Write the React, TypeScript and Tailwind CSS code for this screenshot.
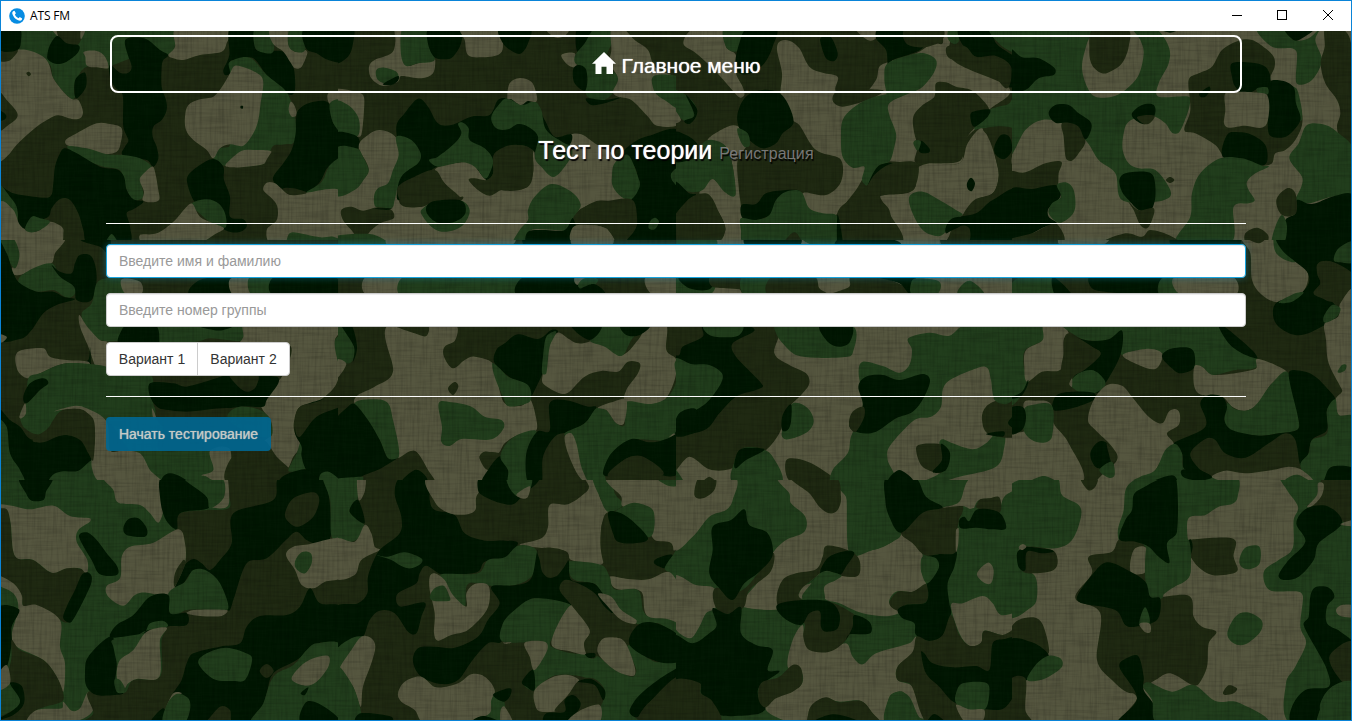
import React from "react";

type Tone = "t" | "g" | "b" | "d";

interface Tile {
  x: number;
  y: number;
  base: Tone;
  patches: string;
}

const tones: Record<Tone, string> = {
  t: "#55563f",
  g: "#213d1c",
  b: "#1f2912",
  d: "#021703",
};

// Camouflage fabric, in tiles of 340x240. Each line is a tone followed by the outline points of a patch.
const tiles: Tile[] = [
  {
    x: 0,
    y: 0,
    base: "b",
    patches: `
g 45 93 530 85 530 120 508 165 440 160 330 200 325 205 260 200 228 240 222 270 225 290 215 297 190 275 160 235 145 190 52 155
t 0 148 52 148 90 152 130 170 148 195 160 235 190 275 215 297 235 300 249 335 240 355 215 357 175 346 150 355 110 380 75 410 45 440 25 465 0 480
b 0 148 52 148 40 172 25 183 0 182
d -10 85 56 85 63 120 52 150 0 150
b 0 282 20 300 50 335 50 355 25 375 0 388
d 0 333 18 345 15 358 0 360
t 155 85 180 85 190 115 175 112
b 175 110 175 85 245 85 238 130 215 137 190 128
t 242 93 255 93 243 118
d 142 165 150 135 172 108 200 130 237 137 232 160 200 185 170 192 145 180
d 228 235 255 218 258 260 230 295 223 270
t 252 155 290 153 315 170 325 203 300 203 262 198 256 170
d 375 122 400 112 440 118 480 150 505 165 490 180 485 200 485 260 498 300 500 330 485 360 460 380 458 410 470 440 475 475 460 500 440 480 380 475 365 460 375 440 385 420 370 380 368 285 345 262 330 230 330 195 360 218 385 218 395 200 382 160
t 530 85 690 85 680 130 665 155 600 165 550 180 520 175 505 165 525 140
d 690 85 765 85 770 150 850 155 880 200 885 270 870 285 840 260 800 225 760 175 720 178 690 185 690 220 675 225 670 210 688 165
g 765 85 810 85 820 155 775 153 762 130
t 810 85 870 85 865 130 885 155 915 150 922 160 905 200 885 205 870 185 850 155 818 130
g 870 85 915 85 915 150 885 155 865 135
d 915 85 1030 85 1030 180 985 180 950 160 918 145
g 690 215 690 185 750 173 800 225 850 265 872 300 885 350 890 410 870 435 825 435 810 455 795 490 740 500 700 500 665 495 640 475 660 445 690 435
t 705 197 740 205 780 225 790 250 782 310 775 360 760 400 730 437 690 433 660 445 640 475 620 450 580 420 558 390 555 350 565 315 600 298 640 290 665 262 690 220
t 725 452 760 450 815 455 795 490 740 500 700 502 676 497 695 475
b 825 440 870 432 878 450 850 490 825 530 800 510 795 490 815 455
t 872 305 885 320 890 345 875 350 866 330
d 722 318 729 318 728 326 722 325
b 79 220 86 215 93 222 86 229
d 895 330 930 308 985 308 1000 370 1030 395 1030 480 985 500 960 545 920 578 860 572 825 550 820 530 850 490 875 450 887 400 888 360
t 985 280 1030 278 1030 312 990 312
g 990 310 1030 305 1030 395 1000 370
g 1030 478 990 495 965 545 918 578 950 585 1030 582
t 790 570 800 548 825 550 860 580 880 585 920 578 1030 578 1030 730 815 730 800 690 830 660 832 620 815 595
b 850 565 880 565 920 578 880 586 860 580
g 865 705 880 697 960 712 1000 710 1030 730 865 730
d 562 550 565 525 600 495 640 477 670 500 672 540 690 590 690 650 730 658 740 680 715 697 675 690 620 650 580 600
g 575 612 620 598 655 610 675 640 678 680 650 680 610 650
t 420 705 470 700 520 665 560 620 578 612 600 650 640 670 672 685 650 700 590 730 430 730
t 197 420 230 400 290 370 330 372 365 385 362 430 350 455 310 463 270 455 220 440 200 435
g 200 440 260 445 320 463 370 465 420 475 455 500 440 520 425 550 430 590 400 600 380 570 370 530 355 508 310 500 260 480
d 195 445 230 460 300 500 350 508 372 530 380 570 400 598 430 605 400 628 380 640 390 680 385 730 265 730 250 690 235 640 210 600 180 597 155 625 145 650 95 670 75 685 55 680 50 630 0 560 40 580 100 590 150 590 160 550 165 500 180 460
t 422 530 455 500 465 515 475 570 477 600 450 607 428 600 432 575 420 545
g 0 555 30 590 50 620 52 660 30 625 0 610
t 0 608 40 630 60 675 90 695 120 690 145 665 185 680 190 700 180 730 0 730
g 75 685 95 650 120 655 150 665 120 690 90 697
g 318 730 335 702 352 730`,
  },
  {
    x: 338,
    y: 0,
    base: "b",
    patches: `
d -10 85 45 85 45 130 30 170 -10 185
t 170 85 190 85 190 140 205 195 240 190 285 178 292 180 285 220 250 235 190 228 180 245 135 258 100 235 93 200 110 180 160 160 172 125
g 188 105 200 85 275 85 270 130 290 180 240 190 205 198 190 170
d 275 85 365 85 369 130 345 170 320 178 288 170 270 130
t 370 85 478 85 495 140 480 165 430 172 390 165 380 120
d 485 85 575 85 570 130 550 160 525 155 495 130
g 115 210 140 203 175 215 180 235 155 253 120 240
d 180 228 180 242 160 255 135 252
t 625 85 690 85 680 108 650 112
t 670 165 710 160 715 200 690 195
d 718 85 770 85 750 130 718 155
g 770 85 820 85 825 120 810 155 800 190 840 230 835 265 800 300 755 295 742 270 748 240 740 205 712 190 712 165 740 130
d 705 210 720 195 742 205 748 240 740 272 710 250
d 745 295 800 300 850 292 800 310 760 315
t 820 85 855 85 890 120 930 150 950 200 1000 225 1030 240 1030 365 960 378 930 350 880 300 840 290 825 275 840 235 815 190 820 150
g 945 230 1000 225 1030 240 1030 325 980 300 950 275
t -10 270 40 272 75 285 78 330 70 405 55 408 30 360 -10 320
g -10 308 30 315 60 350 65 390 55 410 -10 420
d -10 400 55 408 63 440 30 465 -10 475
t 62 440 90 405 125 390 170 408 185 460 180 560 190 615 250 620 300 600 370 600 375 590 350 590 320 550 290 510 345 490 400 490 440 535 490 570 560 565 585 520 585 460 600 440 690 405 730 403 770 430 840 480 880 600 840 605 770 605 705 650 710 680 740 675 800 680 820 730 -10 730 -10 580 50 560 92 510
g -10 450 55 445 75 470 92 510 80 535 50 570 -10 582
d 175 380 200 340 240 296 270 320 300 370 340 375 400 350 455 345 480 300 510 295 590 310 620 360 650 410 700 403 690 440 600 480 585 450 540 435 470 460 465 520 445 540 400 490 345 490 280 510 185 600 180 540 185 470
b 185 600 180 560 230 530 290 510 320 550 370 600 300 603 250 620 200 618
g 175 410 220 420 248 460 240 490 190 530 170 600 160 625 115 622 108 590 120 565 150 550 165 510 182 465
g 273 480 300 470 350 430 370 400 360 372 375 368 392 385 395 420 440 445 465 480 455 520 440 535 410 500 370 487 300 500
g 460 350 490 305 510 295 550 315 590 305 610 330 625 390 680 430 700 440 700 470 650 530 610 500 590 470 600 410 570 380 540 372 510 388 475 385
t 508 295 515 250 545 234 580 245 595 280 595 305 570 303 548 315 520 298
b 392 540 410 535 445 540 465 520 468 465 500 440 540 435 580 450 585 520 570 560 520 570 490 570 455 587 420 570
b 10 630 40 620 75 632 120 622 160 630 167 655 130 668 100 690 70 722 40 690 15 660
d 110 625 160 625 145 630
g 250 630 290 605 370 602 395 630 380 670 350 690 310 695 280 680 255 650
d 265 620 290 603 370 602 382 640 350 665 300 668 270 645
g -10 708 100 703 140 730 -10 730
d 850 470 870 440 930 408 1030 403 1030 730 870 730 890 690 895 640 880 600 900 560 890 500
g 822 530 830 490 870 465 900 530 905 560 880 598 850 590 825 560
b 705 650 740 620 800 605 880 598 897 650 890 690 850 700 790 680 740 675 705 690
g 570 630 590 590 640 552 700 575 728 615 705 655 700 690 650 690 580 690 565 730 525 730 545 690 570 660
d 570 695 620 690 680 690 705 655 708 730 570 730
t 705 682 750 675 800 685 825 730 705 730
g 1000 520 1030 500 1030 560 1005 545
g 935 665 950 653 963 665 950 688 932 685`,
  },
  {
    x: 676,
    y: 0,
    base: "b",
    patches: `
t 55 85 145 85 150 140 180 165 180 220 200 260 205 285 190 292 160 260 110 205 60 160 22 130
g 145 85 220 85 200 125 180 155 150 140
d 215 85 300 85 290 140 265 190 225 220 190 220 178 190 190 130
t 303 150 310 125 340 122 370 145 400 200 440 218 485 230 478 270 500 300 560 285 600 240 610 200 640 185 720 160 770 130 800 130 800 85 830 85 830 180 1000 265 940 330 930 370 895 390 860 430 850 490 720 490 600 490 540 570 485 640 470 650 400 640 380 580 450 585 495 545 495 480 440 460 410 440 370 375 350 360 315 290 318 220
d 432 120 440 110 465 112 485 160 475 183 450 175
t 540 85 610 85 600 115 575 120
d 600 115 610 85 690 85 685 120 740 140 710 160 650 180 636 195 630 150
b 690 85 797 85 797 122 740 142 690 130
g 635 190 700 165 745 160 780 180 775 215 740 260 700 280 640 300 630 270 625 230
g 820 85 850 85 850 120 835 133 815 115
d 850 85 940 85 960 130 1000 160 1030 180 1030 245 1000 260 1005 200 960 168 900 170 860 135
g 940 85 1030 85 1030 155 980 140
b 810 145 830 135 870 140 900 170 960 172 1000 200 1005 240 990 265 955 225 930 187 870 185 820 175
b 470 290 490 270 620 270 600 290 560 305 500 320 475 310
g 500 360 530 325 570 300 620 285 690 279 640 310 640 345 660 400 655 440 640 485 605 500 600 545 575 558 558 540 565 500 530 503 500 470 495 410
b 712 350 740 315 775 290 780 250 810 247 840 260 885 270 920 300 940 330 930 360 895 385 870 420 855 480 800 490 720 490 725 440 715 400
g 895 385 940 330 1000 310 1020 265 1030 430 980 400 940 390 920 385
d 883 350 890 335 940 328 935 350 895 380
d 735 422 760 445 758 458 730 455
g 712 430 720 420 735 425 725 452
t 720 510 760 490 850 490 875 430 915 385 940 420 960 480 968 530 950 580 900 600 860 645 830 680 800 730 670 730 640 630 612 590 690 580 718 560
d 575 558 605 500 650 490 620 520 595 552
b 600 520 650 490 724 490 718 560 690 578 620 580 612 590 640 640 675 730 490 730 484 640 520 600 570 560
g 700 590 740 575 790 600 840 630 860 645 830 660 805 700 780 708 740 690 710 640
b 925 385 1030 400 1030 580 900 625 862 645 895 600 950 580 968 530 960 480 945 420
d 810 680 830 655 900 640 950 600 1030 570 1030 730 880 730 870 680 830 690 810 700
b 810 730 850 680 880 685 875 730
d 955 440 975 405 1000 410 1008 450 985 477 960 465
t 1008 470 1030 440 1030 520 1010 500
d 873 550 885 533 897 550 888 573 876 568
t 95 420 160 378 195 385 215 430 185 480 188 560 195 620 205 730 120 730 148 690 130 640 90 590 70 580 90 540 110 535 160 580 178 585 170 500 150 440
d 185 340 210 290 260 270 310 279 340 320 352 370 320 400 300 430 260 445 220 420 190 385
g 185 385 215 400 222 435 205 440 190 415
g -10 270 30 285 60 320 55 350 30 365 -10 325
d 30 285 62 325 60 350 40 372 25 362 55 345
t -10 325 15 360 -10 368
g 80 430 110 420 150 440 170 500 178 585 145 575 110 537 80 570 40 575 -10 550 -10 480 60 478
d -10 400 30 405 65 435 50 475 -10 482
d -10 545 40 580 60 585 30 610 -10 655
d 197 615 240 612 270 580 330 570 370 572 320 590 290 640 240 660 200 655
g 195 655 240 660 280 645 300 600 330 575 375 575 400 625 440 640 485 650 488 730 390 730 355 697 310 730 205 730 195 690
d 484 645 490 660 500 730 484 730
b -10 660 30 605 60 585 100 585 130 640 148 690 120 730 -10 730`,
  },
  {
    x: 1012,
    y: 0,
    base: "t",
    patches: `
g -10 85 240 85 225 130 210 200 225 260 250 290 300 290 340 270 380 225 395 160 385 120 365 85 430 85 470 140 470 190 440 250 440 290 530 290 532 320 515 370 500 398 480 398 460 370 430 350 400 345 350 365 335 400 332 450 350 490 380 505 430 510 470 560 474 590 430 605 330 600 310 520 260 480 220 420 150 370 90 360 40 390 -10 460
d -10 150 30 172 80 175 128 205 125 225 80 235 40 270 -10 268
b 245 85 345 85 350 140 330 190 300 212 270 220 240 195 232 150
d 450 90 495 90 475 98
b 600 200 630 150 680 122 720 120 760 145 785 170 788 200 775 240 820 250 850 270 868 330 870 375 850 420 820 450 790 460 780 490 750 497 640 470 610 435 550 400 517 390 535 330 530 240 560 220
g 840 262 855 268 868 320 870 360 855 355
d 660 190 720 188 760 200 775 230 770 260 740 265 700 283 670 260 660 230
d 770 250 810 242 845 262 852 310 865 360 830 405 795 413 770 400 768 330
g 735 265 765 262 768 282 740 280
t 640 280 680 275 740 278 765 285 772 320 765 370 745 384 700 377 650 383 636 370 640 330
d 562 280 590 260 595 270 580 290 565 290
d 645 405 680 397 720 405 760 435 765 485 740 497 700 480 632 470
b 150 370 190 360 220 420 200 460 180 482 162 475 155 410
d 110 340 130 315 170 315 200 340 235 365 237 390 220 418 200 380 170 368 130 368
d 360 340 390 315 425 315 428 345 400 372 370 360
b 375 352 405 345 428 348 415 368 395 372
d 322 540 340 520 400 515 425 530 430 590 415 632 380 630 350 600 330 575
b 350 605 380 630 425 625 420 660 405 685 385 675 365 630
b 462 540 474 531 487 540 474 549
b -10 517 40 517 100 490 148 485 140 520 135 560 100 568 40 568 -10 578
d -10 575 60 567 130 555 147 580 135 605 110 625 110 650 135 670 100 680 -10 720
b 60 700 100 680 135 672 150 730 -10 730 -10 718
g 135 555 165 548 185 570 190 620 175 650 140 668 110 640 120 610 147 590
g 625 475 690 475 750 497 770 500 730 520 705 545 710 570 728 600 710 610 665 620 655 730 495 730 535 650 540 580 565 520
b 280 730 340 700 390 710 415 690 470 705 500 730
b 700 700 735 683 768 705 760 730 705 730
g 735 85 830 85 850 120 890 115 925 85 910 120 928 170 925 200 900 240 870 254 852 245 855 160 840 145 780 140
d 820 85 905 85 870 115 845 120
b 940 85 990 85 1017 130 1025 440 985 410 975 380 985 340 975 300 940 250 926 190 938 140
g 885 375 940 375 980 400 1025 450 1025 590 960 590 890 610 850 605 868 560 870 530 832 475 860 430
d 855 600 900 612 970 587 1025 590 1025 730 790 730 820 660 850 640
b 793 600 825 565 850 580 852 640 810 645
g 780 730 790 680 810 645 825 680 815 730`,
  },
  {
    x: 0,
    y: 240,
    base: "b",
    patches: `
t 35 -10 190 -10 165 40 155 70 120 80 60 105 30 95 50 60
g -10 -10 35 -10 58 40 45 85 20 50
g 60 110 110 80 155 70 175 95 220 130 228 155 210 173 190 168 160 150 110 155 60 135
d -10 0 20 40 40 100 60 130 110 155 160 155 190 170 225 178 170 195 130 220 95 270 60 297 -10 292
d 155 75 180 95 215 100 225 70 240 45 275 50 290 110 275 180 230 180 222 140 180 110
d 235 -10 325 -10 325 40 300 20 250 5
g 245 220 275 190 290 130 320 115 365 118 375 165 400 262 380 270 365 300 300 300 260 260
t 365 118 420 125 425 160 375 160
d 570 165 600 120 690 115 700 165
t 690 118 750 110 760 165 700 165
g 750 110 825 110 825 165 755 165
d 825 110 1000 110 1030 165 820 165
t 238 225 262 260 300 300 325 310 320 400 290 385 265 320 240 260
d 270 320 272 380 260 388 235 365 265 360
t 46 350 65 330 130 325 150 350 200 360 265 365 265 385 200 370 120 400 85 415 55 395
g 465 255 740 255 728 300 680 300 630 295 590 305 470 305
d 360 315 365 270 385 255 465 255 478 300 470 315
d 590 255 700 255 670 270 640 270
t 735 250 1030 250 1005 300 1020 350 1010 430 960 480 900 500 882 545 885 580 905 615 880 650 860 685 820 650 790 610 815 580 800 530 780 480 830 430 850 400 868 315 720 315 730 290
g 1005 300 1030 290 1030 400 1010 350
t -10 282 20 290 10 305 -10 308
g 85 415 120 400 200 370 320 380 330 405 450 405 455 470 470 520 490 560 480 630 630 632 640 700 620 730 500 730 440 700 380 620 320 540 235 505 180 515 140 570 110 583 70 560 60 520 78 490
d 70 470 90 430 130 415 145 430 120 450 80 490
t 58 530 75 490 78 520 65 535
d -10 500 30 540 60 560 100 600 200 585 250 605 275 650 270 730 20 730 -10 560
g 148 735 158 705 190 694 235 692 278 660 300 695 330 735
t 160 515 220 498 260 505 320 545 330 630 370 632 420 640 450 690 480 730 310 730 275 680 285 600 280 550 250 510 200 508
b 98 600 150 560 180 515 230 507 275 530 285 570 280 660 265 640 240 600 190 585 130 607
g -10 540 20 560 30 640 60 690 70 730 -10 730
d 450 430 520 430 560 440 680 405 700 400 830 410 835 430 800 480 790 500 720 500 650 510 560 515 490 510 455 480
b 690 400 770 400 768 440 740 455 710 435
t 456 505 468 530 460 535
b 470 510 560 515 690 505 690 545 640 600 560 560 490 560
g 685 520 720 500 780 510 812 540 812 590 750 580 690 545
t 630 632 690 628 685 730 655 730 620 710 605 705 640 690
d 485 735 488 712 510 700 545 712 570 735
b 690 660 740 632 790 600 830 650 870 690 870 730 685 730
g 865 690 890 640 905 605 920 680 880 695
d 905 620 885 580 890 540 910 500 960 480 1000 475 1030 460 1030 730 930 700 905 650
d 838 735 845 712 880 695 925 690 960 735
b 885 565 895 505 950 485 1030 460 1030 495 950 530 900 590
g 960 705 985 695 1015 715 1030 735 965 735`,
  },
  {
    x: 338,
    y: 240,
    base: "b",
    patches: `
g -10 -10 145 -10 160 15 -10 15
t 150 -10 530 -10 520 15 150 15
d 560 -10 700 -10 700 15 560 15
t 705 -10 820 -10 820 15 705 15
t 85 110 200 110 185 165 85 165
g 200 110 560 110 565 135 545 165 190 165
d 560 110 710 110 720 165 540 165
t 713 110 780 110 720 135
g 720 135 740 115 780 118 760 145 730 147
d 705 165 765 132 800 165
t 925 110 1030 110 1030 165 945 165
g -10 255 20 270 50 310 45 360 25 370 -10 345
d 10 255 40 255 57 320 45 365 48 320
t -10 360 25 372 -10 420
t 150 255 350 255 352 300 320 320 318 350 345 385 380 360 410 350 465 370 480 430 500 490 550 497 578 480 597 550 590 575 540 585 500 610 480 640 440 635 425 655 450 690 440 730 282 730 260 680 230 633 180 655 160 600 50 490 60 465 110 440 165 395
b 170 255 267 255 265 288 230 280
d 470 370 475 330 500 310 540 283 600 297 640 270 660 275 630 310 620 380 600 430 578 470 570 440 520 415
g 463 370 485 385 510 410 570 435 578 480 550 495 510 498 495 470 470 410
b 330 445 350 426 361 440 345 465
t 635 310 650 285 665 278 720 310 790 300 850 345 900 300 930 255 985 255 985 330 1015 360 1010 420 980 480 940 492 865 485 865 450 900 400 905 370 870 365 840 395 790 393 740 410 690 458 660 458 620 435 612 420
g 612 400 615 350 625 290 655 275 635 320 625 400
g 755 300 790 255 910 255 880 300 850 348 800 320
d 700 255 790 255 755 300
d 850 255 935 255 905 285 865 285
g 50 490 110 478 150 490 165 540 182 620 180 655 150 655 125 600 90 550
d -10 550 30 500 50 492 90 540 125 600 150 655 180 658 130 690 70 712 -10 730
b 70 720 130 685 180 655 230 633 270 690 285 730
g -10 735 -10 718 40 712 76 712 60 735
d 190 730 230 690 260 705 265 730
g 302 490 340 487 400 500 440 530 490 540 497 565 460 598 370 597 335 618 310 605 312 560
b 425 655 440 637 485 640 490 660 450 690
d 435 730 450 690 488 648 510 690 512 730
g 487 650 510 605 550 580 595 573 575 620 565 730 512 730 510 690
d 635 490 680 480 750 500 775 503 740 550 690 575 650 590 615 650 610 730 570 730 565 640 597 575 635 572
g 680 580 740 550 775 505 805 510 835 550 860 555 862 487 940 492 990 470 1015 420 1010 370 1030 350 1030 560 990 600 880 600 830 640 800 690 800 730 735 730 720 650 700 600
t 780 503 820 487 865 480 858 550 835 550 805 510
t 680 590 700 580 715 610 730 680 750 730 720 705 690 640
d 795 700 820 640 880 597 940 607 1000 590 1030 560 1030 690 970 705 900 650 850 665 820 705
b 815 712 850 665 910 648 975 705
t 993 592 1005 581 1012 583`,
  },
  {
    x: 676,
    y: 240,
    base: "t",
    patches: `
g -10 -10 110 -10 120 15 -10 15
d 210 -10 370 -10 370 15 210 15
g 380 -10 500 -10 470 15 410 15
d 500 -10 620 -10 670 15 480 15
b 800 -10 1030 -10 1030 15 800 15
g -10 110 110 110 100 165 -10 165
d 10 110 110 110 100 148 40 145
b 105 110 200 110 200 165 190 148 110 140
g 200 110 290 110 280 165 205 165
b 290 110 415 110 430 145 455 165 280 165
b 525 110 615 110 710 165 470 165 520 140
d 605 110 715 110 705 165 670 130
g 705 130 720 115 790 125 780 165 710 165
g 848 165 855 138 885 123 925 165
b -10 255 300 255 295 340 340 375 390 400 400 430 380 460 340 500 325 530 310 580 270 630 210 660 160 688 100 688 40 650 -10 690
d 10 345 20 320 80 290 82 255 200 255 235 272 170 310 180 350 260 435 240 450 180 470 130 520 100 560 60 578 -10 578 -10 350
g 85 255 198 255 190 285 150 292 100 285
g -10 362 50 373 100 375 138 400 135 430 100 480 60 510 -10 545
d 0 565 10 520 60 508 60 570
g 300 255 525 255 530 340 500 352 420 353 360 345 320 310 300 280
d 432 255 525 255 522 305 490 320 455 305
g 345 495 370 490 400 510 413 545 395 575 350 595 325 597 317 580
d 318 570 320 525 345 493 345 545 335 570
g 175 665 200 625 250 625 290 650 315 730 175 730
d 175 670 190 630 230 623 265 630 210 660 180 685
g -10 680 25 730 -10 730
b 80 730 100 710 120 730
b 330 662 380 660 440 690 480 730 350 730
g 868 255 1030 255 1030 490 960 480 945 420 935 385 910 382 810 430 795 500 765 530 715 540 640 620 635 660 650 730 470 730 470 690 515 640 525 590 560 500 548 400 560 365 620 378 670 398 700 375 708 330 697 295 760 278 820 287
d 547 440 570 410 620 405 670 420 740 402 762 420 745 470 710 515 660 535 600 575 550 578 520 555 560 500
b 519 545 530 515 562 500 565 530 540 575 525 568
g 790 610 800 598 830 610 890 628 930 610 960 578 985 580 985 620 960 680 850 710 780 730 730 730 800 690
b 918 540 930 500 980 475 1030 465 1030 583 940 583
g 955 470 1030 450 1000 488 970 490
d 930 583 960 575 985 575 980 590
d 997 545 1030 515 1030 565 1005 560
b 720 625 740 612 800 615 822 645 800 695 770 695 735 675
d 795 612 822 640 810 690 770 696 798 660
d 635 730 670 690 715 730`,
  },
  {
    x: 1012,
    y: 240,
    base: "b",
    patches: `
t 145 -10 290 -10 270 15 145 15
d 480 -10 680 -10 680 15 480 15
g 25 110 125 110 125 165 -10 165
d 123 110 180 165 130 165
d 235 110 440 110 440 165 280 155 240 145
g 440 130 460 110 500 115 510 165 445 165
t 490 110 660 110 668 165 510 165
t 690 -10 790 -10 800 40 860 70 888 100 880 145 850 175 795 187 750 165 720 120 715 40
b 700 -10 760 -10 740 10
g 785 -10 800 -10 820 30 850 65 820 60 790 35
d 798 -10 1025 -10 1025 100 960 65 920 68 915 100 925 130 905 160 950 178 980 210 970 235 900 275 850 285 800 260 783 225 795 187 860 165 890 130 885 95 850 65 810 30
g 965 60 980 25 1025 5 1025 65 985 67
b 915 75 960 65 1025 105 1025 165 960 185 930 175 905 160 925 130
g 800 187 850 160 875 158 840 185
t 1025 150 985 190 978 230 938 250 942 300 950 370 985 440 990 455 970 480 980 525 1025 532
g 935 230 960 195 985 205 975 230 940 248
g 977 395 990 375 1003 375 1000 390 985 398
g -10 255 90 255 92 300 40 330 35 380 48 430 -10 490
t 95 255 150 255 170 280 155 300 155 370 140 392 90 395 45 425 37 380 42 330 92 300
g 155 255 620 255 660 310 735 355 728 385 670 390 600 405 570 380 545 380 545 345 520 325 470 330 450 345 400 328 330 345 325 300 330 275 290 300 220 300 180 280
d 170 285 230 302 290 298 330 272 325 345 280 430 250 460 200 420 185 410 265 345 240 320
b 157 295 170 280 200 295 240 320 265 345 200 400 150 395 155 340
d -10 475 30 455 48 420 45 440 25 470
g 175 430 200 400 240 390 270 410 280 435 250 458 200 455
t 172 432 180 415 180 440
t 332 345 400 327 440 332 452 350 430 387 380 375
d 450 350 475 327 530 323 547 340 545 385 505 400 480 385
d 618 255 640 262 720 330 735 355 690 340 650 310
t 547 380 570 380 605 405 730 387 735 357 790 375 825 400 780 430 740 490 700 513 660 500 630 470 570 465 547 440
g 637 540 645 490 670 508 710 510 740 485 780 430 830 400 860 540 855 570 800 580 730 587 650 570
d 565 490 590 465 630 470 645 500 637 540 660 570 740 587 800 580 855 570 860 540 830 400 870 393 910 410 950 450 970 480 945 510 945 570 900 600 885 660 865 675 850 600 820 580 770 610 700 653 640 640 610 600 580 597 535 640 560 685 600 710 540 690 515 685 510 640 485 610 580 560
g 945 580 945 510 970 478 980 525 1025 532 1025 680 960 680 930 730 890 720 865 675 890 640 900 600
d 940 710 960 680 1025 685 1025 730 940 730
d 120 500 135 465 180 455 245 458 245 480 180 505 130 512
t 228 540 245 480 285 435 330 437 360 470 410 530 450 550 470 515 490 507 503 520 500 555 465 580 485 612 460 640 430 690 380 730 255 730 315 660 300 620 250 570
t -10 585 40 570 35 490 70 482 115 490 125 550 170 610 208 730 -10 730
g 35 510 60 495 120 497 120 590 95 608 60 600 35 570
d -10 510 30 500 42 530 30 570 -10 580
d 235 640 260 605 290 615 305 670 285 685 250 680
b 285 610 313 655 300 670 290 640
g 262 690 300 665 308 705 290 713
g 345 735 385 710 430 690 460 630 490 612 510 640 515 685 550 695 600 712 665 735
d 510 690 560 690 600 712 560 722 515 712
t 600 712 640 692 700 700 780 690 830 680 870 690 900 730 670 730
g 815 735 825 715 860 705 900 735
g 50 730 95 708 135 730
d 400 735 480 706 492 735`,
  },
  {
    x: 0,
    y: 480,
    base: "g",
    patches: `
d 60 -10 155 -10 138 35 130 60 95 62 78 40
b -10 85 25 90 45 228 100 240 155 278 210 262 260 275 275 300 240 350 205 425 180 420 100 378 70 378 60 340 -10 285
t -10 72 40 78 90 88 160 77 210 108 270 115 270 125 235 150 230 185 262 240 260 280 240 265 200 265 155 278 100 240 45 228 32 130 20 88 -10 85
d 275 290 270 320 215 425 190 415 200 380 225 330 245 285 262 277
t -10 285 40 310 65 345 70 377 110 375 180 420 180 500 195 550 190 635 170 590 130 540 50 500 35 465 55 385 40 340 -10 312
d -10 388 57 388 35 440 35 490 20 560 -10 565
b 35 480 60 510 130 540 170 590 190 640 185 665 110 690 90 730 -10 730 -10 715 40 690 70 660 60 620 30 610 25 580 35 530
t -10 590 20 555 30 610 -10 632
d 30 610 65 618 72 670 40 705 -10 720 40 690 60 660
t 85 730 110 690 185 685 190 665 215 692 240 685 265 635 282 680 260 710 200 730
d 370 145 385 118 415 115 440 145 435 170 380 165
d 237 170 260 157 290 180 320 220 352 260 350 285 300 283 275 240
b 525 145 540 100 620 90 690 80 690 -10 1030 -10 1030 730 245 730 280 700 265 635 370 640 400 600 480 590 485 480 500 440 505 350 525 310 555 250 555 200
t 315 -10 490 -10 483 50 490 90 475 128 450 100 420 75 355 68 340 30
d 485 -10 560 -10 620 50 625 85 540 100 530 148 495 115 480 50
t 660 -10 682 -10 687 70 670 85 630 78 672 50
g 550 -10 660 -10 672 50 630 85 620 50
d 525 320 550 260 580 237 605 250 630 270 660 240 695 190 700 100 820 60 840 -10 960 -10 985 40 992 170 950 190 920 180 890 155 860 178 800 235 740 250 700 360 683 390 640 290 580 275 550 310
t 365 230 390 200 460 188 535 148 555 190 555 250 525 320 510 350 440 338 405 345 370 377 325 350 320 318 360 295
b 525 280 550 240 557 250 525 320
b 855 100 880 55 940 37 958 60 940 110 895 140 865 125
g 970 -10 1030 -10 1030 175 995 170 990 60
g 505 340 555 305 580 270 620 272 660 310 685 385 640 390 560 390 515 410
t 560 400 580 390 680 390 665 408 600 408
t 858 225 880 200 930 192 1000 175 1030 178 1030 285 975 305 940 325 905 315 885 270
g 885 245 905 217 932 220 935 250 915 280 890 268
d 330 470 350 435 400 405 450 350 505 345 510 400 560 400 560 435 500 440 430 460 370 470
d 255 580 265 530 335 470 350 550 345 620 370 640 345 645 290 645 260 620
g 337 480 430 460 450 430 490 423 502 440 430 455 380 500 355 550 340 500
t 350 580 360 540 400 510 440 455 500 443 480 480 478 590 410 597 385 610 370 630 355 610
g 343 600 360 600 375 625 370 638 350 635
d 930 325 960 370 1030 385 1030 505 960 488 890 540 820 580 800 640 770 730 700 730 690 690 660 680 610 730 560 730 540 640 520 640 545 600 560 550 580 520 660 500 720 490 740 440 780 408 860 405 900 380
g 595 550 620 520 680 503 750 525 755 550 735 600 700 603 640 597
b 779 573 800 552 821 573 800 594
g 760 730 790 670 820 590 880 555 920 510 950 490 1030 503 1030 730
t 875 598 900 560 940 535 985 528 985 560 950 605 915 617
d 902 640 925 622 915 645
d 905 730 915 670 950 668 1000 700 1018 730
d 450 730 490 685 500 730
t 500 680 520 640 545 640 520 660
g 490 730 500 675 530 642 565 655 570 690 550 730`,
  },
  {
    x: 338,
    y: 480,
    base: "b",
    patches: `
g -10 -10 60 -10 58 60 35 95 80 135 75 160 50 182 -10 185
t 58 -10 82 -10 80 35 62 60
d 35 95 60 60 80 130
t -10 180 50 185 80 135 100 160 110 200 125 210 70 240 50 285 -10 292
d 170 40 190 -10 270 -10 275 60 290 90 350 105 380 160 440 182 500 182 540 190 500 235 440 245 420 275 360 283 310 283 265 257 245 280 235 310 180 340 175 365 190 380 260 368 250 410 235 460 210 455 170 400 125 392 95 420 75 470 40 480 -10 505 -10 385 60 370 88 340 90 290 110 235 130 205 185 160 190 110
g 115 225 150 230 200 217 250 235 250 250 220 265 190 258 160 240
t 270 -10 440 -10 415 50 412 90 380 104 330 98 290 65
d 420 30 430 -10 600 -10 550 50 525 73 490 70 440 50
g 510 -10 578 -10 575 30 555 30 540 50 515 25
t 535 45 560 25 577 20 570 50 555 56
t 545 195 610 175 630 140 635 75 690 73 740 40 753 20 740 -10 780 -10 785 50 810 95 790 140 795 250 700 240 685 215 620 205
g 765 -10 818 -10 830 40 855 75 810 95 785 50
t 810 -10 1030 -10 1030 200 945 175 930 90 855 80 850 50
g 955 -10 1030 -10 1030 15 990 17
g 830 97 855 80 890 68 940 85 950 120 945 160 930 172 880 150 830 120
b 788 160 800 105 820 97 850 105 900 150 945 180 1000 190 1003 240 980 280 930 298 860 297 810 275 790 220
d 810 100 840 97 880 120 930 175 890 190 840 185 825 160
d 950 240 970 230 1003 225 1000 255 980 265 950 252
t 815 290 870 297 930 298 990 275 1030 300 1030 430 930 410 910 335 850 330 825 320
g 980 265 1005 225 1030 195 1030 305 1000 280
g 690 245 790 255 815 290 830 328 900 330 915 390 935 412 990 418 1030 440 1030 475 960 430 890 432 850 400 790 340 770 312 710 300 692 275
g 310 283 420 280 450 240 500 232 540 197 590 205 597 240 580 290 530 315 460 318 390 312 380 380 340 350 310 310
d 460 320 530 316 580 295 600 210 620 285 650 290 690 240 700 300 770 312 800 360 820 400 690 375 590 355 540 390 495 430 490 485 450 490 400 545 360 600 310 612 250 590 225 545 240 505 290 500 350 503 420 470 450 420 485 370
b 600 210 640 203 685 215 690 240 660 285 640 290 615 280 605 240
g 495 485 495 430 530 390 590 355 695 373 680 415 640 480 640 500 700 520 770 525 820 560 880 590 895 570 870 495 950 545 1000 540 1018 570 960 610 880 690 900 730 780 730 800 640 760 600 700 585 640 590 590 630 555 610 585 570 625 500 610 485
t 560 488 620 485 628 510 590 570 575 530
t 495 488 520 487 505 492
t 640 490 695 378 740 410 760 450 740 490 745 523 700 515
b 665 330 680 300 720 310 770 340 800 380 850 420 900 435 880 490 820 475 790 480 775 530 750 530 738 490 755 450 700 375
d 742 522 770 520 770 532 752 533
d 745 310 772 315 800 350 770 335
t 780 342 820 350 850 390 895 420 890 432 850 420 810 380
t 275 330 275 290 290 280 320 300 345 345 385 380 385 340 410 312 450 315 455 360 440 400 390 450 340 465 300 482 288 460 290 400
g 275 350 290 325 318 318 335 350 335 362 285 362
t 780 520 790 480 820 472 860 485 890 560 885 588 830 570
d 875 495 900 435 955 430 1030 475 1030 540 960 545
t 180 640 200 605 250 590 295 622 360 610 400 583 440 590 470 630 460 680 460 730 260 730 230 690 190 665
d 552 605 585 570 590 630 565 620
g 460 660 480 635 500 670 490 730 400 730 455 700
d 465 645 500 628 520 627 515 650 495 665
d 400 730 435 708 490 730
t 590 630 640 593 690 585 725 605 690 650 670 690 610 695 593 680
b 690 645 725 600 770 597 800 630 790 665 730 695 670 695 650 690
d 680 660 705 645 728 670 715 700 690 730 620 730 625 700 680 695
d 720 605 760 597 800 630 795 660 770 615
d 875 690 900 650 960 600 1030 560 1030 590 930 670 900 710 880 705
b 905 720 950 650 1030 590 1030 730
g -10 515 40 475 80 470 60 500 10 570 -10 570
t 5 565 40 510 70 470 100 475 112 500 100 550 75 620 68 680 45 620 15 590
g -10 560 40 610 68 690 62 730 -10 730
d 55 730 68 700 160 710 160 730
t 488 690 500 680 525 730 490 730
t 720 695 785 675 780 730 690 730`,
  },
  {
    x: 676,
    y: 480,
    base: "g",
    patches: `
t -10 20 30 -10 175 -10 170 60 150 90 100 110 50 170 -10 205
b 55 45 70 -10 117 -10 115 30 80 55
t 310 -10 480 -10 510 40 520 200 590 210 650 185 675 160 720 190 740 225 735 270 750 310 710 335 660 335 640 370 690 385 640 408 560 400 490 370 445 355 445 310 495 285 450 275 380 320 330 385 205 382 210 350 250 300 290 220 330 180 385 155 388 110 345 70 340 40
g 480 -10 640 -10 640 110 675 160 650 185 590 210 520 218 513 60 490 25
b 345 -10 475 -10 495 50 485 90 460 100 430 80 400 40
t -10 290 60 315 115 325 120 380 90 400 70 440 40 475 -10 430
b 118 325 200 330 290 220 295 240 280 280 220 330 203 382 155 402 118 380
d 110 140 165 120 205 88 220 135 275 160 290 225 250 275 205 310 170 360 130 325 100 280 110 210
d 110 385 155 402 195 382 195 460 240 495 290 510 275 570 310 575 250 620 250 660 270 685 240 703 130 705 100 660 75 640 70 610 -10 605 -10 470 50 490 100 460 122 435
b -10 605 70 608 75 640 110 665 130 730 -10 730
t 335 560 350 480 380 435 390 490 450 515 510 490 530 530 560 553 600 520 700 490 720 470 710 520 665 560 665 600 710 620 750 710 730 712 700 650 670 635 640 650 620 730 590 700 555 663 490 665 440 655 400 690 400 730 350 730 270 690 300 640 370 620 378 580
b 247 630 260 605 310 590 350 555 375 565 378 610 350 635 300 655 270 682 250 665
b 302 350 320 300 360 280 420 268 440 230 450 198 500 205 545 230 553 270 540 290 495 287 450 272 420 290 370 335 380 360 460 365 530 400 540 420 510 480 460 515 400 510 382 470 385 430 340 410 310 385
d 435 265 460 230 510 213 535 220 510 260 490 285 450 273 400 310 430 285
t 368 345 385 318 420 310 380 355
g 378 350 400 318 440 275 495 285 480 300 445 320 445 360 400 363
d 303 375 380 360 460 365 490 400 485 445 450 455 435 440 432 395 400 400 375 435 325 415
d 535 405 580 425 582 460 520 463 510 480 530 440
b 640 370 665 335 710 335 750 312 757 350 740 372 690 375 665 392
d 665 390 690 375 745 370 757 345 752 310 745 235 790 222 840 210 835 260 815 310 820 370 825 400 800 470 760 483 720 465 715 430 680 415
g 735 240 745 228 780 235 788 265 755 310 737 280
b 675 160 700 120 740 95 800 82 860 78 845 140 840 215 790 222 745 225 710 190
d 632 -10 715 -10 750 50 800 82 740 98 675 158 640 110 628 60
t 800 82 850 65 890 -10 1030 -10 1030 20 985 50 970 95 965 60 910 60 890 88 860 78
b 905 90 910 60 940 55 970 52 970 98
g 850 125 862 100 890 85 910 90 900 130
d 850 120 865 110 880 123 905 88 970 98 990 145 950 148 900 143 855 145
t 840 150 848 145 847 190 840 215
t 903 280 935 248 953 270 945 310 920 305
t 825 375 860 370 920 348 950 370 975 405 1030 400 1030 450 980 465 925 452 915 490 880 497 850 460
b 825 405 850 465 880 497 915 488 925 453 980 465 1030 450 1030 730 760 730 735 700 705 615 665 600 665 560 710 515 722 470 760 483 800 465
d 735 515 745 520 770 550 830 562 900 558 940 570 950 490 980 478 1030 480 1030 600 990 680 930 688 840 670 790 620 750 580
g 840 640 860 610 930 608 940 640 925 690 870 688 840 670
t 840 675 880 688 925 690 915 730 870 730
b 397 700 410 672 450 652 490 667 555 663 590 700 610 730 400 730
d 410 730 470 703 540 720 530 730
g 628 730 640 655 680 635 705 680 715 730
d 755 730 775 702 808 730`,
  },
  {
    x: 1012,
    y: 480,
    base: "t",
    patches: `
g -10 30 40 -5 132 -10 150 45 200 75 207 110 180 180 130 205 40 200 20 210 30 260 70 290 75 350 60 380 -10 405
b 15 225 40 200 120 210 137 240 125 270 70 280 30 272
d 15 220 30 205 45 200 110 208 125 215 90 220 45 215 40 270 20 262
t 20 202 32 192 43 200 30 210
b 205 -10 255 -10 250 20 228 30
g 345 20 400 -10 670 -10 677 50 660 72 620 80 580 105 527 120 535 250 530 290 480 325 420 360 400 300 320 180 335 90
b 525 185 560 177 665 177 665 230 677 270 650 283 600 285 560 262 530 220
d 523 195 535 178 542 200 533 228
b 230 230 300 215 325 178 400 200 410 300 420 350 530 347 545 410 570 440 613 455 590 490 585 560 560 612 540 615 475 580 430 600 360 640 300 600 255 540 265 400 190 355 240 280
t 355 275 365 210 403 205 402 270 390 282
g 405 200 440 235 472 248 480 190 530 180 535 280 510 310 460 325 450 355 415 352 400 300
d 365 45 390 25 450 -5 492 -5 495 155 465 190 472 248 440 230 410 200 370 185 322 178 340 120 360 90
d 195 350 240 285 285 247 350 272 400 305 415 350 445 357 435 420 370 440 340 435 310 390 210 370
g 382 430 398 382 412 410 410 432
t 382 432 412 430 416 455 400 457
g 682 240 700 203 742 200 743 250 715 267 690 262
g 646 460 670 410 705 397 748 420 745 455 700 493 665 490
b 633 638 650 616 675 625 665 640 640 645
b 350 630 375 655 340 700 310 730 340 730 400 650
d 322 560 350 532 380 530 395 590 395 630 430 680 440 730 318 730 375 655
g 393 620 410 607 480 635 545 615 610 663 680 668 760 730 440 730 420 660
b -10 455 20 420 70 413 95 440 110 520 60 500 -10 495
d -10 483 60 487 110 525 80 550 45 600 -10 605
g 110 527 145 535 150 560 110 590 70 603 45 597 75 550
b -10 605 40 595 40 690 60 730 -10 730
g 810 -10 1025 -10 1025 730 835 730 822 610 850 560 882 490 865 440 873 350 860 335 780 333 758 310 758 270 800 240 842 205 845 120 858 80 825 30
b 885 80 920 50 935 -10 1025 -10 1025 125 970 110 950 80
d 853 130 885 85 950 80 990 130 920 190 905 240 860 290 815 300 800 285 830 240 880 185
t 885 80 915 45 918 10 935 12 930 45 905 75
t 985 133 1025 120 1025 138
d 895 350 910 322 950 323 967 350 945 380 945 430 985 455 1025 495 1025 610 960 620 925 670 920 730 840 730 840 680 880 630 950 620 945 570 920 520 875 435 890 410
t 972 390 990 375 1025 378 1025 410 985 408
b 952 530 1025 485 1025 610 990 605
g 920 700 935 670 960 620 1025 610 1025 730 920 730`,
  },
];

// Closed Catmull-Rom spline through the given points.
function outline(v: number[]): string {
  const n = v.length / 2;
  const at = (i: number) => {
    const k = ((i % n) + n) % n;
    return [v[k * 2], v[k * 2 + 1]];
  };
  let d = `M${v[0]} ${v[1]}`;
  for (let i = 0; i < n; i++) {
    const [a, b, c, e] = [at(i - 1), at(i), at(i + 1), at(i + 2)];
    const len = Math.hypot(c[0] - b[0], c[1] - b[1]);
    const s1 = Math.min(1 / 6, (len * 0.4) / (Math.hypot(c[0] - a[0], c[1] - a[1]) || 1));
    const s2 = Math.min(1 / 6, (len * 0.4) / (Math.hypot(e[0] - b[0], e[1] - b[1]) || 1));
    d += `C${b[0] + (c[0] - a[0]) * s1} ${b[1] + (c[1] - a[1]) * s1} ${c[0] - (e[0] - b[0]) * s2} ${c[1] - (e[1] - b[1]) * s2} ${c[0]} ${c[1]}`;
  }
  return d + "Z";
}

function Camouflage() {
  return (
    <svg className="col-start-1 row-start-1 block" width="1350" height="689" viewBox="1 31 1350 689" aria-hidden="true">
      <defs>
        <filter id="weft" x="0" y="0" width="100%" height="100%">
          <feTurbulence type="fractalNoise" baseFrequency="0.03 0.4" numOctaves="2" seed="4" />
          <feColorMatrix values="0 0 0 0 0  0 0 0 0 0  0 0 0 0 0  2.2 0 0 0 -0.95" />
        </filter>
        <filter id="warp" x="0" y="0" width="100%" height="100%">
          <feTurbulence type="fractalNoise" baseFrequency="0.4 0.03" numOctaves="2" seed="9" />
          <feColorMatrix values="0 0 0 0 0  0 0 0 0 0  0 0 0 0 0  2.2 0 0 0 -0.95" />
        </filter>
      </defs>
      {tiles.map((tile) => (
        <svg key={`${tile.x}-${tile.y}`} x={tile.x} y={tile.y} width="340" height="241" viewBox="0 0 1020 723">
          <rect width="1020" height="723" fill={tones[tile.base]} />
          {tile.patches
            .trim()
            .split("\n")
            .map((line, i) => {
              const [tone, ...points] = line.trim().split(" ");
              return <path key={i} d={outline(points.map(Number))} fill={tones[tone as Tone]} />;
            })}
        </svg>
      ))}
      <rect x="0" y="31" width="1352" height="690" filter="url(#weft)" opacity="0.13" />
      <rect x="0" y="31" width="1352" height="690" filter="url(#warp)" opacity="0.13" />
    </svg>
  );
}

function TitleBar() {
  return (
    <header className="flex h-[30px] items-center justify-between bg-white pl-2 font-['Open_Sans',sans-serif] text-xs text-black">
      <div className="flex items-center gap-[5px]">
        <svg width="16" height="16" viewBox="0 0 16 16">
          <circle cx="8" cy="8" r="7.8" fill="#078ce2" />
          <path
            d="M4.1 3.2 5.5 2.7 6.9 5.2 5.9 6.4C6.6 8.1 7.8 9.4 9.6 10.2L10.8 9.1 13.2 10.6 12.7 12C11.8 13 10.4 12.9 8.6 12C6.1 10.8 4.4 8.9 3.5 6.3C3.1 5 3.2 4 4.1 3.2Z"
            fill="#fff"
          />
        </svg>
        <span className="tracking-[-0.15px]">ATS FM</span>
      </div>
      <svg width="120" height="30" viewBox="0 0 120 30" fill="none" stroke="#000" shapeRendering="crispEdges">
        <path d="M1 14.5h10M46.5 9.5h9v9h-9z" />
        <path d="m92 9 10 10M102 9l-10 10" shapeRendering="auto" />
      </svg>
    </header>
  );
}

export default function App() {
  return (
    <div className="flex h-[721px] w-[1352px] flex-col overflow-hidden border border-[#0a84d8] bg-black font-['Liberation_Sans',Arial,sans-serif]">
      <TitleBar />
      <div className="grid h-[689px] grid-cols-1">
        <Camouflage />
        <main className="relative col-start-1 row-start-1 mx-auto w-[1140px] text-sm">
          <a className="mx-1 mt-1 flex h-[58px] items-center justify-center rounded-lg border-2 border-white text-[21px] text-white [text-shadow:0_0_1px_#fff]">
            <svg className="mr-1.5 mb-0.5" width="24" height="23" viewBox="0 0 24 23" fill="#fff">
              <path d="M12 0 24 11.7H21V22H14.5V14.7H9.5V22H3.5V11.7H0Z" />
            </svg>
            <span className="pt-1 tracking-[-0.05px]">Главное меню</span>
          </a>
          <h1 className="mt-[41px] flex h-8 items-baseline justify-center gap-[7px] text-[25px] leading-8 text-white [text-shadow:0_0_1px_#fff,1px_2px_1px_#000]">
            Тест по теории
            <small className="text-base tracking-[0.08px] text-[#777] [text-shadow:1px_2px_1px_#000]">Регистрация</small>
          </h1>
          <hr className="mt-[57px] border-white" />
          <input
            placeholder="Введите имя и фамилию"
            className="mt-5 block h-[34px] w-full rounded border border-[#1aa5df] bg-white px-3 shadow-[inset_0_1px_1px_rgba(0,0,0,.075),0_0_7px_rgba(26,165,223,.4)] outline-none placeholder:text-[#999]"
          />
          <input
            placeholder="Введите номер группы"
            className="mt-[15px] block h-[34px] w-full rounded border border-[#ccc] bg-white px-3 shadow-[inset_0_1px_1px_rgba(0,0,0,.075)] outline-none placeholder:text-[#999]"
          />
          <div className="mt-[15px] flex text-[#333]">
            <button className="h-[34px] w-[92px] rounded-l border border-[#ccc] bg-white">Вариант 1</button>
            <button className="-ml-px h-[34px] w-[93px] rounded-r border border-[#ccc] bg-white">Вариант 2</button>
          </div>
          <hr className="mt-5 border-white" />
          <button className="mt-5 block h-[34px] w-[165px] rounded bg-[#006793]/90 text-[#c4c9c5] [text-shadow:0_0_1px_#c4c9c5]">
            Начать тестирование
          </button>
        </main>
      </div>
    </div>
  );
}
